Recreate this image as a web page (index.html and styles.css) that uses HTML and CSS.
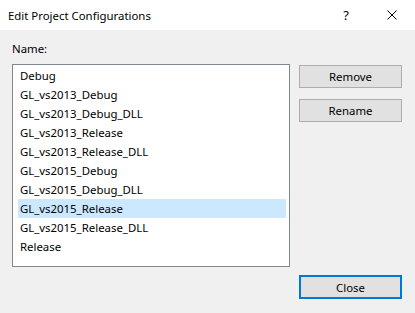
FILE: index.html
```html
<!DOCTYPE html>
<html lang="en">
<head>
    <meta charset="UTF-8">
    <title>Edit Project Configurations</title>
    <link rel="stylesheet" href="styles.css">
</head>
<body>
    <div class="dialog">
        <div class="titlebar">
            <span class="title">Edit Project Configurations</span>
            <span class="caption-btn">?</span>
            <span class="caption-btn">
                <svg width="10" height="10" viewBox="0 0 10 10">
                    <path d="M0.5 0.5 L9.5 9.5 M9.5 0.5 L0.5 9.5" stroke="#000" stroke-width="1" fill="none"/>
                </svg>
            </span>
        </div>

        <div class="content">
            <div class="label">Name:</div>

            <div class="listbox">
                <div class="item">Debug</div>
                <div class="item">GL_vs2013_Debug</div>
                <div class="item">GL_vs2013_Debug_DLL</div>
                <div class="item">GL_vs2013_Release</div>
                <div class="item">GL_vs2013_Release_DLL</div>
                <div class="item">GL_vs2015_Debug</div>
                <div class="item">GL_vs2015_Debug_DLL</div>
                <div class="item selected">GL_vs2015_Release</div>
                <div class="item">GL_vs2015_Release_DLL</div>
                <div class="item">Release</div>
            </div>

            <div class="side">
                <button class="btn">Remove</button>
                <button class="btn">Rename</button>
            </div>

            <button class="btn default close">Close</button>
        </div>
    </div>
</body>
</html>
```

FILE: styles.css
```css
body {
    margin: 0;
    font-family: "Noto Sans", "Open Sans", sans-serif;
    font-size: 11.4px;
    color: #000;
}
.dialog {
    width: 415px;
    height: 313px;
    display: flex;
    flex-direction: column;
}
.titlebar {
    height: 30px;
    background: #fff;
    display: flex;
    align-items: center;
    padding-left: 8px;
}
.title {
    flex: 1;
}
.caption-btn {
    width: 46px;
    height: 30px;
    display: flex;
    align-items: center;
    justify-content: center;
    font-size: 13px;
}
.content {
    flex: 1;
    background: #f0f0f0;
    padding: 11px 13px 0 12px;
    display: grid;
    grid-template-columns: 278px 103px;
    grid-template-rows: auto 203px auto;
    column-gap: 9px;
    align-content: start;
}
.label {
    grid-column: 1 / 3;
    height: 23px;
    line-height: 16px;
}
.listbox {
    background: #fff;
    border: 1px solid #828790;
    padding-top: 1px;
}
.item {
    height: 19px;
    line-height: 19px;
    margin: 0 3px 0 5px;
    padding-left: 2px;
    white-space: nowrap;
}
.item.selected {
    background: #cce8ff;
}
.side {
    display: flex;
    flex-direction: column;
    gap: 11px;
    padding-top: 1px;
}
.btn {
    height: 23px;
    width: 103px;
    background: #e1e1e1;
    border: 1px solid #adadad;
    font-family: inherit;
    font-size: 11.4px;
    color: #000;
    padding: 0;
}
.btn.default {
    border: 2px solid #0078d7;
}
.close {
    grid-column: 2;
    margin-top: 8px;
    height: 24px;
}
```
